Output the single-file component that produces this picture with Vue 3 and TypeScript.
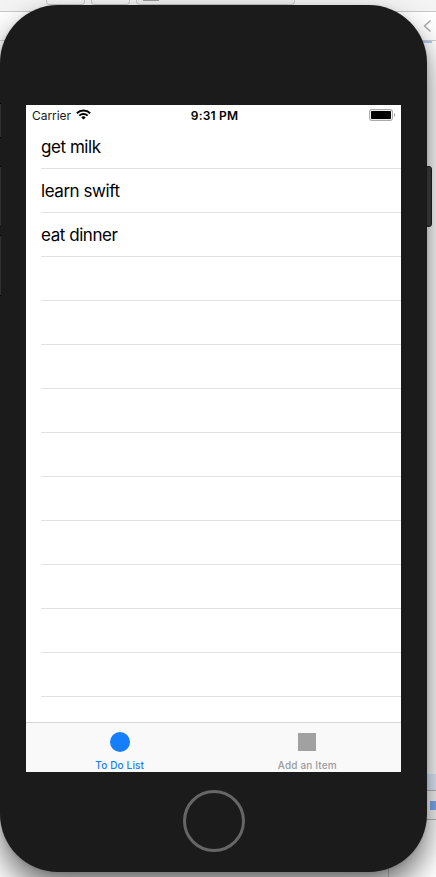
<script setup lang="ts">
import { ref } from 'vue'

interface Tab {
  id: string
  label: string
  shape: 'circle' | 'square'
}

const items = ref<string[]>(['get milk', 'learn swift', 'eat dinner'])
const emptyRows = 10
const tabs: Tab[] = [
  { id: 'list', label: 'To Do List', shape: 'circle' },
  { id: 'add', label: 'Add an Item', shape: 'square' },
]
const active = ref('list')
</script>

<template>
  <div class="desktop">
    <div class="backdrop">
      <div class="toolbar">
        <span class="field small"></span>
        <span class="field small"></span>
        <span class="field wide"><i class="thumb"></i></span>
      </div>
      <div class="jumpbar">
        <svg width="9" height="14" viewBox="0 0 9 14"><path d="M7.5 1.5 1.5 7l6 5.5" fill="none" stroke="#a6a6a6" stroke-width="1.4" /></svg>
      </div>
      <div class="editor"><i class="mark"></i></div>
      <div class="highlight"></div>
      <div class="debugbar"><i class="flag"></i></div>
      <div class="console"></div>
    </div>

    <i class="side mute"></i>
    <i class="side up"></i>
    <i class="side down"></i>
    <i class="power"></i>
    <div class="phone">
      <main class="screen">
        <header class="status">
          <div class="carrier">
            <span>Carrier</span>
            <svg class="wifi" width="15" height="11" viewBox="0 0 15 11">
              <path d="M.9 4.2a9.3 9.3 0 0 1 13.2 0" fill="none" stroke="#000" stroke-width="2" />
              <path d="M3.3 6.7a6 6 0 0 1 8.4 0" fill="none" stroke="#000" stroke-width="1.8" />
              <path d="M7.5 10.6 5.3 8.4a3.1 3.1 0 0 1 4.4 0z" />
            </svg>
          </div>
          <time>9:31 PM</time>
          <svg class="battery" width="27" height="12" viewBox="0 0 27 12">
            <rect x=".6" y=".6" width="22.8" height="10.8" rx="2.4" fill="#fff" stroke="#aaa" stroke-width="1.1" />
            <rect x="2" y="2" width="20" height="8" rx=".8" />
            <path d="M25 4v4q1.3-.5 1.3-2T25 4z" fill="#aaa" />
          </svg>
        </header>
        <ul class="list">
          <li v-for="item in items" :key="item"><span>{{ item }}</span></li>
          <li v-for="n in emptyRows" :key="n"></li>
        </ul>
        <nav class="tabs">
          <button
            v-for="tab in tabs"
            :key="tab.id"
            :class="['tab', { active: active === tab.id }]"
            @click="active = tab.id"
          >
            <span class="icon"><i :class="tab.shape"></i></span>
            <span class="label">{{ tab.label }}</span>
          </button>
        </nav>
      </main>
      <div class="home"></div>
    </div>
  </div>
</template>

<style>
body {
  overflow: hidden;
}
</style>

<style scoped>
* {
  box-sizing: border-box;
}
.desktop {
  position: relative;
  width: 436px;
  height: 877px;
  padding-top: 5px;
  overflow: hidden;
  font-family: Inter, "Liberation Sans", sans-serif;
}
.backdrop {
  position: absolute;
  inset: 0;
  display: flex;
  flex-direction: column;
  background: #fff;
}
.toolbar {
  display: flex;
  gap: 6px;
  height: 12px;
  padding-left: 46px;
  background: #f4f4f4;
  border-bottom: 1px solid #c9c9c9;
}
.field {
  height: 5px;
  border: 1px solid #c8c8c8;
  border-top: 0;
  border-radius: 0 0 4px 4px;
  background: #f4f4f4;
}
.small {
  width: 39px;
}
.wide {
  width: 159px;
  padding-left: 6px;
  background: #efefef;
}
.thumb {
  display: block;
  width: 16px;
  height: 1px;
  background: #999;
}
.jumpbar {
  display: flex;
  align-items: center;
  justify-content: flex-end;
  height: 29px;
  padding-right: 4px;
  border-bottom: 1px solid #d0d0d0;
}
.editor {
  height: 733px;
  background: #fff;
}
.mark {
  display: block;
  width: 9px;
  height: 2px;
  margin-left: 423px;
  background: #b4caff;
}
.highlight {
  height: 16px;
  background: #e4effd;
}
.debugbar {
  height: 30px;
  padding: 10px 0 0 430px;
  border-top: 1px solid #b8b8b8;
  border-bottom: 1px solid #b8b8b8;
  background: #fafafa;
}
.flag {
  display: block;
  height: 9px;
  background: #7faef4;
}
.console {
  flex: 1;
  width: 389px;
  border-right: 1px solid #ccc;
}
.phone {
  position: relative;
  display: flex;
  flex-direction: column;
  align-items: center;
  width: 427px;
  height: 867px;
  padding-top: 100px;
  border-radius: 58px;
  background: #1b1b1b;
  box-shadow: 0 16px 30px rgba(0, 0, 0, 0.56), 0 1px 4px rgba(0, 0, 0, 0.12);
}
.side {
  position: absolute;
  z-index: 1;
  left: 0;
  width: 1px;
  background: #303030;
  border-top: 1px solid #000;
  border-bottom: 1px solid #000;
}
.mute {
  top: 103px;
  height: 35px;
}
.up {
  top: 166px;
  height: 61px;
}
.down {
  top: 235px;
  height: 61px;
}
.power {
  position: absolute;
  z-index: 1;
  left: 426px;
  top: 166px;
  width: 6px;
  height: 61px;
  border: 1px solid #181818;
  border-radius: 0 3px 3px 0;
  background: #303030;
}
.screen {
  display: flex;
  flex-direction: column;
  width: 375px;
  height: 667px;
  overflow: hidden;
  background: #fff;
  color: #000;
}
.status {
  display: grid;
  grid-template-columns: 1fr auto 1fr;
  align-items: center;
  flex: none;
  height: 20px;
  padding: 0 5px 0 6px;
  font-size: 12px;
}
.carrier {
  display: flex;
  align-items: center;
  gap: 5px;
  color: #1a1a1a;
  letter-spacing: -0.05px;
}
.wifi {
  margin-top: -1px;
}
time {
  padding-left: 1px;
  font-weight: 600;
  letter-spacing: 0.2px;
}
.battery {
  justify-self: end;
}
.list {
  flex: 1;
  min-height: 0;
  margin: 0;
  padding: 0 0 0 15px;
  list-style: none;
}
li {
  display: flex;
  align-items: center;
  height: 44px;
  border-bottom: 1px solid #e2e2e2;
  font-size: 17px;
  letter-spacing: -0.45px;
}
.tabs {
  display: flex;
  flex: none;
  height: 50px;
  border-top: 1px solid #d5d5d5;
  background: #f9f9f9;
}
.tab {
  display: flex;
  flex: 1;
  flex-direction: column;
  align-items: center;
  padding: 8px 0 0;
  border: 0;
  background: none;
  color: #9b9b9b;
  font: 500 10px/12px Inter, "Liberation Sans", sans-serif;
  letter-spacing: 0.15px;
}
.tab.active {
  color: #147efb;
}
.icon {
  display: flex;
  align-items: center;
  justify-content: center;
  height: 22px;
  margin-bottom: 6px;
}
.circle {
  width: 20px;
  height: 20px;
  border-radius: 50%;
  background: currentColor;
}
.square {
  width: 18px;
  height: 18px;
  background: #a1a1a1;
}
.home {
  width: 62px;
  height: 62px;
  margin-top: 18px;
  border: 3px solid #666;
  border-radius: 50%;
}
</style>
